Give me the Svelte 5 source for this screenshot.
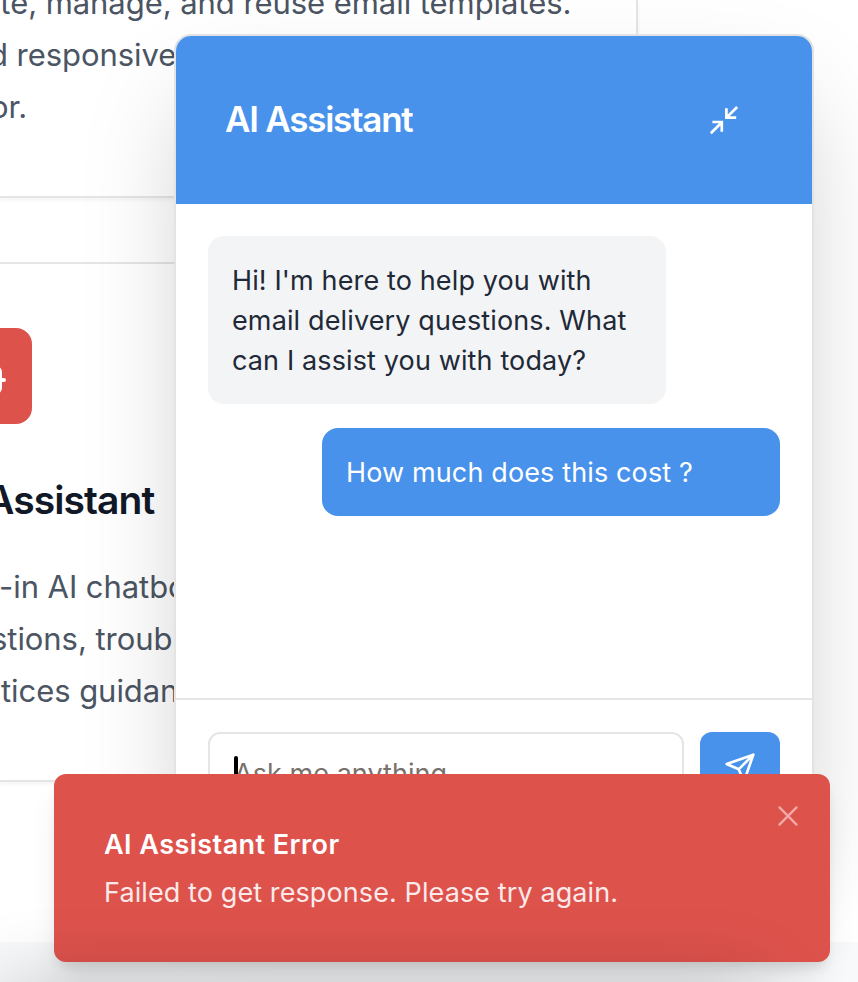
<script>
  const messages = [
    { role: 'bot', lines: ["Hi! I'm here to help you with", 'email delivery questions. What', 'can I assist you with today?'] },
    { role: 'user', lines: ['How much does this cost ?'] }
  ];
</script>

<main class="page">
  <div class="cards">
    <section class="card first">
      <p><span style="margin-left:-17px">ate, manage, and reuse email templates.</span></p>
      <p><span style="margin-left:-11px">d responsive</span></p>
      <p><span style="margin-left:-10px">or.</span></p>
    </section>
    <section class="card second">
      <div class="badge">
        <svg width="48" height="48" viewBox="0 0 24 24" fill="none" stroke="currentColor" stroke-width="2" stroke-linecap="round" stroke-linejoin="round"><path d="M12 8V4H8" /><rect width="16" height="12" x="4" y="8" rx="2" /><path d="M2 14h2M20 14h2M15 13v2M9 13v2" /></svg>
      </div>
      <h2><span style="margin-left:-14px">Assistant</span></h2>
      <p><span style="margin-left:-1px">-in AI chatbot</span></p>
      <p><span style="margin-left:-9px">stions, trouble</span></p>
      <p><span style="margin-left:1px">tices guidance</span></p>
    </section>
  </div>
  <footer class="bottom"></footer>

  <aside class="chat">
    <header>
      <h3><span>AI Assistant</span></h3>
      <svg class="collapse" width="32" height="32" viewBox="0 0 32 32" fill="none" stroke="currentColor" stroke-width="2.7"><path d="M29.2 3 18.4 13.6M18.4 4.2v9.4h9.8M2.8 29.2l11-11M4.4 18h9.4v9.8" /></svg>
    </header>
    <div class="messages">
      {#each messages as message}
        <div class="bubble {message.role}">
          {#each message.lines as line}<div><span>{line}</span></div>{/each}
        </div>
      {/each}
    </div>
    <div class="compose">
      <div class="field"><i class="caret"></i><span>Ask me anything...</span></div>
      <button aria-label="Send">
        <svg width="32" height="32" viewBox="0 0 24 24" fill="none" stroke="currentColor" stroke-width="2" stroke-linecap="round" stroke-linejoin="round"><path d="m22 2-7 20-4-9-9-4ZM22 2 11 13" /></svg>
      </button>
    </div>
  </aside>

  <div class="toast">
    <strong><span>AI Assistant Error</span></strong>
    <div class="detail"><span>Failed to get response. Please try again.</span></div>
    <svg class="close" width="32" height="32" viewBox="0 0 24 24" fill="none" stroke="currentColor" stroke-width="1.8" stroke-linecap="round"><path d="M18.4 5.6 5.6 18.4M5.6 5.6l12.8 12.8" /></svg>
  </div>
  <div class="shade"></div>
</main>

<style>
  :global(body) { margin: 0; background: #fff; overflow: hidden; }
  .page { position: relative; width: 858px; height: 982px; overflow: hidden; background: #fff; font-family: Inter, sans-serif; box-sizing: border-box; display: flex; flex-direction: column; }
  .page :global(*) { box-sizing: border-box; }
  p, h2, h3 { margin: 0; white-space: nowrap; }
  .cards { display: flex; flex-direction: column; gap: 64px; height: 942px; flex: none; }
  .card { width: 638px; border: 2px solid #e5e5e5; border-left: 0; box-shadow: 0 2px 4px rgba(0,0,0,.05); color: #4b5563; font-size: 31px; line-height: 52px; letter-spacing: -.06px; }
  .first { height: 198px; border-top: 0; display: flex; flex-direction: column; }
  .first p:first-child { margin-top: -23px; }
  .second { height: 520px; padding-top: 64px; }
  .badge { width: 32px; height: 96px; border-radius: 0 16px 16px 0; background: #de524c; color: #fff; display: flex; align-items: center; justify-content: flex-end; padding-right: 24px; overflow: hidden; }
  .badge svg { flex: none; }
  h2 { font-size: 39px; line-height: 56px; font-weight: 600; color: #111827; letter-spacing: -.9px; margin: 48px 0 33px; }
  .bottom { height: 40px; background: #f8f9fb; }
  .chat { position: absolute; left: 174px; top: 34px; width: 640px; height: 812px; border: 2px solid #e3e3e3; border-radius: 17px; background: #fff; box-shadow: 0 50px 100px -24px rgba(0,0,0,.25); overflow: hidden; display: flex; flex-direction: column; }
  header { height: 168px; flex: none; background: #4892eb; color: #fff; display: flex; justify-content: space-between; align-items: center; padding: 0 72px 0 49px; }
  h3 { font-size: 35px; font-weight: 600; letter-spacing: -1.25px; line-height: 48px; padding-bottom: 2px; }
  .messages { flex: 1; padding: 32px; display: flex; flex-direction: column; gap: 24px; }
  .bubble { width: 458px; padding: 25px 24px 23px; border-radius: 16px; font-size: 27px; line-height: 40px; letter-spacing: .13px; white-space: nowrap; }
  .bot { background: #f3f4f6; color: #1f2937; }
  .user { background: #4892eb; color: #fff; align-self: flex-end; }
  .compose { flex: none; height: 146px; border-top: 2px solid #e5e5e5; padding: 32px; display: flex; gap: 16px; }
  .field { width: 476px; height: 80px; border: 2px solid #e5e5e5; border-radius: 12px; display: flex; align-items: center; padding: 2px 0 0 24px; color: #78716c; font-size: 27px; letter-spacing: .05px; }
  .caret { width: 4px; height: 34px; background: #000; border-radius: 2px; margin-right: -4px; }
  button { width: 80px; height: 80px; padding: 0 0 8px; border: 0; border-radius: 12px; background: #4892eb; color: #fff; display: flex; align-items: center; justify-content: center; }
  .toast { position: absolute; left: 54px; top: 774px; width: 776px; height: 188px; border-radius: 12px; background: #de524c; box-shadow: 0 20px 30px -6px rgba(0,0,0,.1), 0 8px 12px -4px rgba(0,0,0,.1); color: #fff; padding: 51px 50px 49px; font-size: 27px; line-height: 40px; white-space: nowrap; }
  strong { display: block; font-weight: 600; letter-spacing: .45px; }
  .detail { margin-top: 8px; opacity: .88; letter-spacing: .1px; }
  .close { position: absolute; right: 26px; top: 26px; opacity: .5; }
  .shade { position: absolute; left: 0; top: 984px; width: 760px; height: 100px; box-shadow: 0 0 80px 0 rgba(0,0,0,.2); }
</style>
